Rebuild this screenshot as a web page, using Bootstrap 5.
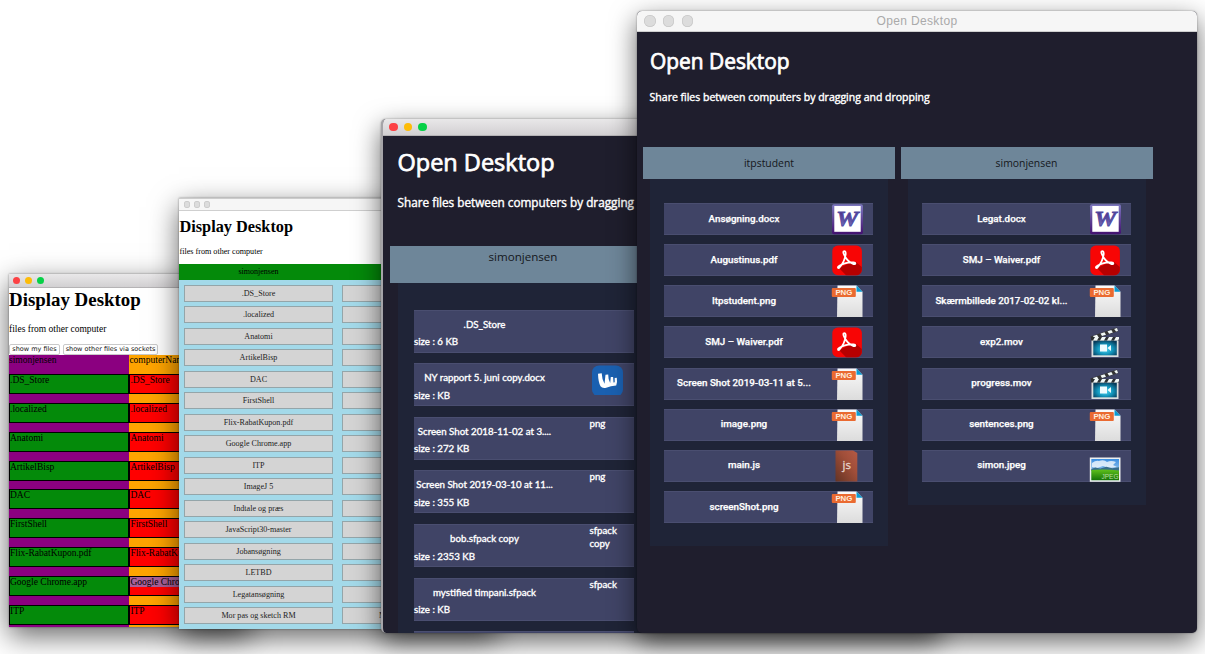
<!DOCTYPE html>
<html lang="en">
<head>
<meta charset="utf-8">
<meta name="viewport" content="width=device-width, initial-scale=1">
<title>Open Desktop</title>
<link href="https://cdn.jsdelivr.net/npm/bootstrap@5.3.0/dist/css/bootstrap.min.css" rel="stylesheet">
<style>
body{background:#fff;width:1205px;height:654px;overflow:hidden;position:relative;line-height:1.2}
.win{position:absolute;overflow:hidden;background:#fff;box-shadow:0 9px 27px rgba(0,0,0,.6),0 0 2px rgba(0,0,0,.4)}
.win .bar{background:linear-gradient(#e9e8e9,#d2d0d2);border-bottom:1px solid #b5b3b5}
.win .bar.idle{background:#f6f6f6;border-bottom-color:#cfcfcf}
.dot{border-radius:50%;background:#dcdcdc;box-shadow:inset 0 0 0 .7px #c8c8c8}
.dot.r{background:#fc4144;box-shadow:none}.dot.y{background:#fdbc08;box-shadow:none}.dot.g{background:#06d147;box-shadow:none}
.serif{font-family:"Liberation Serif",serif;color:#000}
.serif h1{font-weight:700;margin:0}

#w1{left:9px;top:274px;width:241px;height:353px}
#w1 .bar{height:14px;padding-left:4px;gap:4.4px}
#w1 .dot{width:7.4px;height:7.4px}
#w1 h1{font-size:18.9px;line-height:24px;height:33px}
#w1 .sub{font-size:9.5px;line-height:14px;height:23px;padding-top:1px}
#w1 .btns{height:11px;gap:3px}
#w1 .btns button{font:6.5px/8px "DejaVu Sans",sans-serif;height:10.5px;padding:0;border:1px solid #c9c9c9;border-radius:2px;background:#fff;color:#111;white-space:nowrap}
#w1 .strip{width:120.4px;height:280px;font-size:9.5px;line-height:11px}
#w1 .strip>p{margin:0;height:19px}
#w1 .cell{height:20px;margin-bottom:8.87px;border:1.3px solid #000;white-space:nowrap;color:#000;flex:none}
.purple{background:#8b0080}.orange{background:#fea400}
.purple .cell{background:#048a0a}.orange .cell{background:#f00}
.cell mark{background:#a96199;padding:0;color:#000}

#w2{left:179px;top:198px;width:318px;height:431px}
#w2 .bar{height:13px;padding-left:4.5px;gap:4.1px;border-top:1px solid #ccc}
#w2 .dot{width:6.2px;height:6.2px}
#w2 h1{font-size:16.3px;line-height:20px;height:33px;padding:6px 0 0 .5px}
#w2 .sub{font-size:8.15px;line-height:10px;height:20px;padding:3px 0 0 .5px}
#w2 .owner{background:#048a0a;height:15.5px;font-size:8px;line-height:15px;width:318px}
#w2 .owner span{width:159px}
#w2 .pool{background:#a3d9e9;padding:5.5px 5px 0;gap:4.47px 9px;display:grid;grid-template-columns:149px 149px;grid-auto-rows:17px}
#w2 .pool div{background:#d4d4d4;border:1px solid #94a5a9;font-size:8.1px;line-height:15px;text-align:center;color:#222;white-space:nowrap}

.dark{background:#1f1e2d;font-family:"Open Sans",sans-serif;color:#fff}
.dark h1{font-weight:400;margin:0;white-space:nowrap;-webkit-text-stroke:.75px #fff}
.lead-line{white-space:nowrap;-webkit-text-stroke:.4px #fff}
.owner-bar{background:#6e8699;color:#15171c;text-align:center}
.pane{background:#1f2437}
.item{background:#404466;box-shadow:inset 0 1px #4a4e70,inset 0 -1px #4a4e70}

#w3{left:381px;top:119px;width:560px;height:514px;border-left:2.5px solid #a5a4a8;border-radius:5px}
#w3 .bar{height:17px;padding-left:6px;gap:6px}
#w3 .dot{width:8.6px;height:8.6px}
#w3 h1{font-size:23.5px;line-height:30px;padding:11px 0 0 14.5px;height:55px}
#w3 .lead-line{font-size:11.75px;line-height:16px;padding:3px 0 0 14.5px;height:55px}
#w3 .owner-bar{width:266px;height:37px;margin-left:7px;font-size:11.6px;line-height:22px}
#w3 .pane{margin-left:14.5px;width:252px;padding:26.5px 16px 0;height:360px;font-family:Lato,sans-serif;font-size:9.7px;line-height:13.3px;-webkit-text-stroke:.35px #fff}
#w3 .item{height:43px;margin-bottom:10.65px}
#w3 .item .nm{width:141px;text-align:center;padding-top:8px;height:25.5px;white-space:nowrap}
#w3 .item .ext{width:44px;padding-left:0}
#w3 .left{width:176px;flex:none;white-space:nowrap;padding-left:.5px}

#w4{left:637px;top:11px;width:560px;height:622px;border-radius:5px}
#w4 .bar{height:21px;padding-left:7px;gap:7.2px;position:relative}
#w4 .bar span{position:absolute;left:0;right:0;text-align:center;font:12px/20px "Liberation Sans",sans-serif;color:#aaa;letter-spacing:.35px}
#w4 .dot{width:11.6px;height:11.6px}
#w4 h1{font-size:20.9px;line-height:28px;padding:15px 0 0 13px;height:58px}
#w4 .lead-line{font-size:10.5px;line-height:14px;padding-left:12.6px;height:57px}
#w4 .cols{padding-left:6px;gap:5.5px}
#w4 .person{width:252px}
#w4 .owner-bar{height:32px;font-size:10.4px;line-height:32px}
#w4 .pane{margin:0 7px;padding:24px 15px 23.5px 14px;font-family:Roboto,sans-serif;font-weight:500;font-size:9.8px;-webkit-text-stroke:.25px #fff}
#w4 .person+.person .item{position:static}
#w4 .item{height:32px;margin-bottom:9.15px}
#w4 .item:last-child{margin-bottom:0}
#w4 .item .nm{width:160px;text-align:center;padding-bottom:1px;white-space:nowrap}
#w4 .item svg{width:32px;height:32px;margin-left:7px;flex:none;-webkit-text-stroke:0}
</style>
</head>
<body>
<svg width="0" height="0" class="position-absolute">
<defs>
<linearGradient id="gw" x1="0" y1="0" x2="0" y2="1"><stop offset="0" stop-color="#7d78bf"/><stop offset="1" stop-color="#42106f"/></linearGradient>
<linearGradient id="gt" x1="0" y1="0" x2="0" y2="1"><stop offset="0" stop-color="#3d1a78"/><stop offset="1" stop-color="#8080c8"/></linearGradient>
<linearGradient id="gp" x1="0" y1="0" x2="0" y2="1"><stop offset="0" stop-color="#fafafa"/><stop offset="1" stop-color="#dcdcdc"/></linearGradient>
<linearGradient id="gj" x1="0" y1="1" x2="1" y2="0"><stop offset="0" stop-color="#643323"/><stop offset=".6" stop-color="#a04e39"/><stop offset="1" stop-color="#b55a45"/></linearGradient>
<radialGradient id="gm" cx=".5" cy=".6" r=".65"><stop offset="0" stop-color="#58d8f4"/><stop offset=".5" stop-color="#1396bd"/><stop offset="1" stop-color="#073b5b"/></radialGradient>
<linearGradient id="gs" x1="0" y1="0" x2="0" y2="1"><stop offset="0" stop-color="#3b8ee0"/><stop offset="1" stop-color="#d9eefa"/></linearGradient>
<linearGradient id="gg" x1="0" y1="0" x2="0" y2="1"><stop offset="0" stop-color="#5fc01c"/><stop offset="1" stop-color="#147408"/></linearGradient>
<symbol id="doc" viewBox="0 0 32 32"><rect x="1" y="1.3" width="31" height="30" rx="2" fill="url(#gw)"/><rect x="3.3" y="3" width="26.4" height="25.8" fill="#fff"/><text x="16.3" y="22.800" text-anchor="middle" textLength="22" lengthAdjust="spacingAndGlyphs" font-family="Liberation Serif" font-weight="700" font-style="italic" font-size="21" fill="url(#gt)" stroke="#5049a0" stroke-width=".8">W</text></symbol>
<symbol id="pdf" viewBox="0 0 32 32"><rect x="1.3" y="1.6" width="29.6" height="29.6" rx="5.5" fill="#f80505"/><path d="M8 24 19 19 25 18 30.8 23V26a5.5 5.5 0 0 1-5.5 5.2H15z" fill="#b60000"/><path d="M12.500 7.500c1.500-1 2.300.3 2.200 2.500-.5 5-3.600 10.500-6.200 13.500-1.500 1.500-2.300-.5-.5-1.500 4-2.700 9.500-4 14.500-3.600 2.500.2 2.500 2.200 0 1.600-4.500-1-8.500-6.500-9.900-10.500-.3-1-.4-1.600-.1-2z" fill="none" stroke="#fff" stroke-width="1.800"/></symbol>
<symbol id="png" viewBox="0 0 32 32"><path d="M6.500.5h19l6 6.200V32h-25.500z" fill="url(#gp)"/><path d="M25.500.5l6 6.200h-6z" fill="#0a9bd2"/><rect x=".8" y="3" width="24" height="9" rx="1" fill="#ea6a31"/><text x="12.900" y="10.100" text-anchor="middle" textLength="17" lengthAdjust="spacingAndGlyphs" font-family="Liberation Sans" font-weight="700" font-size="7.200" fill="#ffeede">PNG</text></symbol>
<symbol id="js" viewBox="0 0 32 32"><path d="M4.500.5h17.500l4.300 2.500V31.500h-21.800z" fill="url(#gj)"/><text x="15.800" y="19" text-anchor="middle" font-family="Open Sans" font-size="11.500" fill="#e6d3cb" stroke="#e6d3cb" stroke-width=".3">js</text></symbol>
<symbol id="mov" viewBox="0 0 32 32"><path d="M1.500 10.500 28 1.500l1 3.700L2.500 14z" fill="#343434"/><path d="M4 10l4-1.300 1.500 2.600-4 1.300zM11.500 7.500l4-1.300 1.500 2.500-4 1.300zM18.500 5.200l3.800-1.300 1.600 2.500-3.800 1.300zM25.200 3l2.800-1 1 3-2 .6z" fill="#f1f8f7"/><rect x="2.500" y="11.500" width="27" height="19.500" fill="#d9dedf"/><rect x="4.300" y="14.500" width="23.500" height="14.800" fill="url(#gm)"/><path d="M2 11h28v3.500H2z" fill="#2d3032"/><path d="M6 11h4l-2 3.500H4zM13 11h4l-2 3.500h-4zM20 11h4l-2 3.500h-4zM27 11h3v2l-1 1.500h-4z" fill="#f1f8f7"/><path d="M11 18.500h7v7h-7zM18.500 22l3.500-3v6z" fill="#effcff"/></symbol>
<symbol id="jpg" viewBox="0 0 32 32"><rect x=".8" y="7.500" width="30.700" height="24.300" fill="#eef0ef"/><rect x="2.300" y="9" width="27.700" height="21.300" fill="url(#gs)"/><path d="M3 13q4-3 7-2 5-2 8 1 4-2 9 0l-3 3 4 2-8 1-6-2-6 2-5-1z" fill="#fff" opacity=".75"/><path d="M2.300 19l4-1.500 5 1 6-1.800 6 1.500 6.700-1V21H2.300z" fill="#386e8c"/><path d="M2.300 20q14-1 27.700.5v9.800H2.300z" fill="url(#gg)"/><text x="21" y="29.300" text-anchor="middle" textLength="17" lengthAdjust="spacingAndGlyphs" font-family="Liberation Sans" font-size="7.500" fill="#b9dda4">JPEG</text></symbol>
</defs>
</svg>

<section class="win serif" id="w1">
  <div class="bar d-flex align-items-center"><i class="dot r"></i><i class="dot y"></i><i class="dot g"></i></div>
  <h1>Display Desktop</h1>
  <div class="sub">files from other computer</div>
  <div class="btns d-flex"><button style="width:51px">show my files</button><button style="width:95px">show other files via sockets</button></div>
  <div class="d-flex">
    <div class="strip purple d-flex flex-column"><p>simonjensen</p><div class="cell">.DS_Store</div><div class="cell">.localized</div><div class="cell">Anatomi</div><div class="cell">ArtikelBisp</div><div class="cell">DAC</div><div class="cell">FirstShell</div><div class="cell">Flix-RabatKupon.pdf</div><div class="cell">Google Chrome.app</div><div class="cell">ITP</div></div>
    <div class="strip orange d-flex flex-column"><p>computerName</p><div class="cell">.DS_Store</div><div class="cell">.localized</div><div class="cell">Anatomi</div><div class="cell">ArtikelBisp</div><div class="cell">DAC</div><div class="cell">FirstShell</div><div class="cell">Flix-RabatKupon.pdf</div><div class="cell"><mark>Google Chrome.app</mark></div><div class="cell">ITP</div></div>
  </div>
</section>

<section class="win serif" id="w2">
  <div class="bar idle d-flex align-items-center"><i class="dot"></i><i class="dot"></i><i class="dot"></i></div>
  <h1>Display Desktop</h1>
  <div class="sub">files from other computer</div>
  <div class="owner d-flex"><span class="text-center">simonjensen</span></div>
  <div class="pool">
    <div>.DS_Store</div><div></div><div>.localized</div><div></div><div>Anatomi</div><div></div><div>ArtikelBisp</div><div></div><div>DAC</div><div></div><div>FirstShell</div><div></div><div>Flix-RabatKupon.pdf</div><div></div><div>Google Chrome.app</div><div></div><div>ITP</div><div></div><div>ImageJ 5</div><div></div><div>Indtale og præs</div><div></div><div>JavaScript30-master</div><div></div><div>Jobansøgning</div><div></div><div>LETBD</div><div></div><div>Legatansøgning</div><div></div><div>Mor pas og sketch RM</div><div class="text-start" style="padding-left:36px">M</div><div></div><div></div>
  </div>
</section>

<section class="win dark" id="w3">
  <div class="bar d-flex align-items-center"><i class="dot r"></i><i class="dot y"></i><i class="dot g"></i></div>
  <h1>Open Desktop</h1>
  <div class="lead-line">Share files between computers by dragging</div>
  <div class="owner-bar">simonjensen</div>
  <div class="pane">
    <div class="item d-flex"><div class="left"><div class="nm">.DS_Store</div>size : 6 KB</div></div>
    <div class="item d-flex"><div class="left"><div class="nm">NY rapport 5. juni copy.docx</div>size : KB</div>
      <svg width="34" height="32" viewBox="-2 -2 34 32"><rect x="0" y=".5" width="31" height="31" rx="7" fill="#1a60b0"/><path d="M6 8.800l3.700-.5q.2 6 2.800 10.500l1-9 2.700-.2q-.1 5 2 8.500l.6-6 2.300-.2.400 5.500 1.200-.2v-4.200l2.100-.2q.8 5-.6 7.700-5.500.6-10 2.200-3.800 1-5.700-1.500-2.200-3.700-2.500-12.400z" fill="#fff"/></svg></div>
    <div class="item d-flex"><div class="left"><div class="nm">Screen Shot 2018-11-02 at 3....</div>size : 272 KB</div><div class="ext">png</div></div>
    <div class="item d-flex"><div class="left"><div class="nm">Screen Shot 2019-03-10 at 11...</div>size : 355 KB</div><div class="ext">png</div></div>
    <div class="item d-flex"><div class="left"><div class="nm">bob.sfpack copy</div>size : 2353 KB</div><div class="ext">sfpack copy</div></div>
    <div class="item d-flex"><div class="left"><div class="nm">mystified timpani.sfpack</div>size : KB</div><div class="ext">sfpack</div></div>
    <div class="item d-flex"></div>
  </div>
</section>

<section class="win dark" id="w4">
  <div class="bar idle d-flex align-items-center"><i class="dot"></i><i class="dot"></i><i class="dot"></i><span>Open Desktop</span></div>
  <h1>Open Desktop</h1>
  <div class="lead-line">Share files between computers by dragging and dropping</div>
  <div class="cols d-flex align-items-start">
    <div class="person"><div class="owner-bar">itpstudent</div>
      <div class="pane">
        <div class="item d-flex align-items-center"><div class="nm">Ansøgning.docx</div><svg><use href="#doc"/></svg></div>
        <div class="item d-flex align-items-center"><div class="nm">Augustinus.pdf</div><svg><use href="#pdf"/></svg></div>
        <div class="item d-flex align-items-center"><div class="nm">Itpstudent.png</div><svg><use href="#png"/></svg></div>
        <div class="item d-flex align-items-center"><div class="nm">SMJ – Waiver.pdf</div><svg><use href="#pdf"/></svg></div>
        <div class="item d-flex align-items-center"><div class="nm">Screen Shot 2019-03-11 at 5...</div><svg><use href="#png"/></svg></div>
        <div class="item d-flex align-items-center"><div class="nm">image.png</div><svg><use href="#png"/></svg></div>
        <div class="item d-flex align-items-center"><div class="nm">main.js</div><svg><use href="#js"/></svg></div>
        <div class="item d-flex align-items-center"><div class="nm">screenShot.png</div><svg><use href="#png"/></svg></div>
      </div></div>
    <div class="person"><div class="owner-bar">simonjensen</div>
      <div class="pane">
        <div class="item d-flex align-items-center"><div class="nm">Legat.docx</div><svg><use href="#doc"/></svg></div>
        <div class="item d-flex align-items-center"><div class="nm">SMJ – Waiver.pdf</div><svg><use href="#pdf"/></svg></div>
        <div class="item d-flex align-items-center"><div class="nm">Skærmbillede 2017-02-02 kl...</div><svg><use href="#png"/></svg></div>
        <div class="item d-flex align-items-center"><div class="nm">exp2.mov</div><svg><use href="#mov"/></svg></div>
        <div class="item d-flex align-items-center"><div class="nm">progress.mov</div><svg><use href="#mov"/></svg></div>
        <div class="item d-flex align-items-center"><div class="nm">sentences.png</div><svg><use href="#png"/></svg></div>
        <div class="item d-flex align-items-center"><div class="nm">simon.jpeg</div><svg><use href="#jpg"/></svg></div>
      </div></div>
  </div>
</section>
<script src="https://cdn.jsdelivr.net/npm/bootstrap@5.3.0/dist/js/bootstrap.bundle.min.js"></script>
</body>
</html>
